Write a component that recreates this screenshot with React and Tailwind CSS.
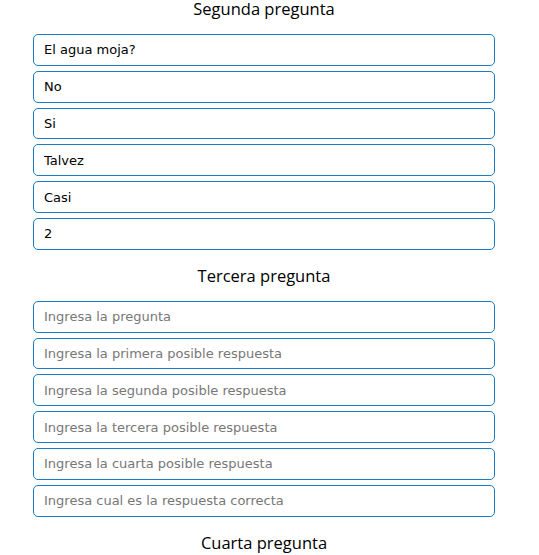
import React from 'react';

const sections = [
  {
    title: 'Segunda pregunta',
    fields: [
      { value: 'El agua moja?', placeholder: 'Ingresa la pregunta' },
      { value: 'No', placeholder: 'Ingresa la primera posible respuesta' },
      { value: 'Si', placeholder: 'Ingresa la segunda posible respuesta' },
      { value: 'Talvez', placeholder: 'Ingresa la tercera posible respuesta' },
      { value: 'Casi', placeholder: 'Ingresa la cuarta posible respuesta' },
      { value: '2', placeholder: 'Ingresa cual es la respuesta correcta' },
    ],
  },
  {
    title: 'Tercera pregunta',
    fields: [
      { value: '', placeholder: 'Ingresa la pregunta' },
      { value: '', placeholder: 'Ingresa la primera posible respuesta' },
      { value: '', placeholder: 'Ingresa la segunda posible respuesta' },
      { value: '', placeholder: 'Ingresa la tercera posible respuesta' },
      { value: '', placeholder: 'Ingresa la cuarta posible respuesta' },
      { value: '', placeholder: 'Ingresa cual es la respuesta correcta' },
    ],
  },
  { title: 'Cuarta pregunta', fields: [] },
];

function Question({ title, fields }) {
  return (
    <section className="flex flex-col">
      <h2 className="mb-[16px] text-center text-[16.5px] leading-[18px] font-normal text-black font-['Open_Sans',sans-serif]">
        {title}
      </h2>
      <div className="flex flex-col gap-[5px]">
        {fields.map((field, i) => (
          <input
            key={i}
            type="text"
            defaultValue={field.value}
            placeholder={field.placeholder}
            className="h-[31.8px] w-full rounded-[5px] border border-[#1b7bc4] bg-white px-[10px] text-[13px] text-black placeholder:text-[#777] outline-none font-['DejaVu_Sans',sans-serif]"
          />
        ))}
      </div>
    </section>
  );
}

export default function App() {
  return (
    <main className="min-h-screen w-full overflow-hidden bg-white">
      <div className="ml-[33px] flex w-[462px] flex-col gap-[17px]">
        {sections.map((s) => (
          <Question key={s.title} title={s.title} fields={s.fields} />
        ))}
      </div>
    </main>
  );
}
